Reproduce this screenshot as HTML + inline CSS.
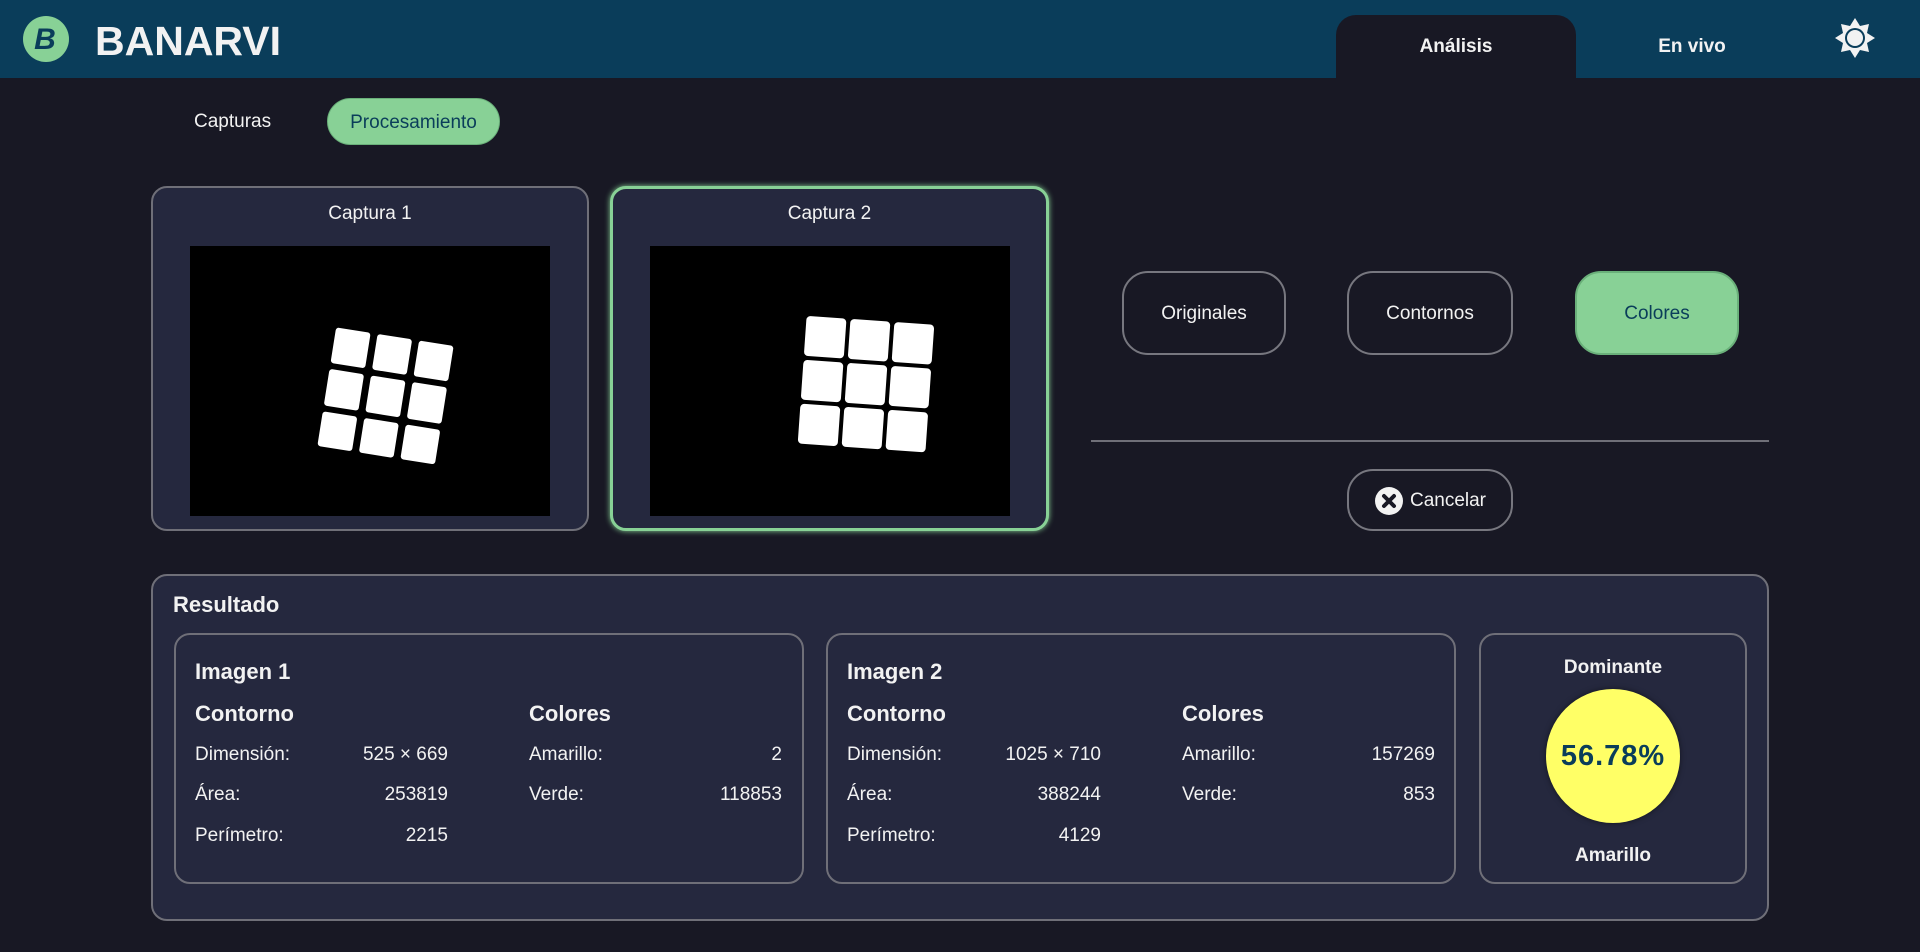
<!DOCTYPE html>
<html><head><meta charset="utf-8">
<style>
*{box-sizing:border-box;margin:0;padding:0}
body{width:1920px;height:952px;background:#181824;font-family:"Liberation Sans",Arial,sans-serif;color:#f2f2f2;position:relative;overflow:hidden}
.a{position:absolute}
.hdr{left:0;top:0;width:1920px;height:78px;background:#0a3d5a}
.card{background:#25283e;border:2px solid #6f6f78;border-radius:16px}
.btn{border:2px solid #77777f;border-radius:26px;display:flex;align-items:center;justify-content:center;font-size:19px;color:#f2f2f2}
.lbl{font-size:19px}
.b{font-weight:bold}
.r{text-align:right}
</style></head><body>
<div class="a hdr"></div>
<svg class="a" style="left:23px;top:16px" width="46" height="46" viewBox="0 0 46 46"><circle cx="23" cy="23" r="23" fill="#88d196"/><text x="22" y="33" text-anchor="middle" font-family="Liberation Sans" font-weight="bold" font-style="italic" font-size="30" fill="#0a3d5a">B</text></svg>
<div class="a b" style="left:95px;top:18px;font-size:41px;color:#f2f2f2">BANARVI</div>
<div class="a" style="left:1336px;top:15px;width:240px;height:63px;background:#181824;border-radius:20px 20px 0 0"></div>
<div class="a b" style="left:1336px;top:36px;width:240px;text-align:center;font-size:19px">Análisis</div>
<div class="a b" style="left:1592px;top:36px;width:200px;text-align:center;font-size:19px">En vivo</div>
<svg class="a" style="left:1834px;top:17px" width="42" height="42" viewBox="-21 -21 42 42"><polygon fill="#f2f2f2" points="0,-20 5,-12 14,-14 12,-5 20,0 12,5 14,14 5,12 0,20 -5,12 -14,14 -12,5 -20,0 -12,-5 -14,-14 -5,-12"/><circle r="10" fill="#0a3d5a"/><circle r="8" fill="#f2f2f2"/></svg>

<div class="a" style="left:194px;top:111px;font-size:19px">Capturas</div>
<div class="a" style="left:327px;top:98px;width:173px;height:47px;background:#88d196;border-radius:24px;color:#0a3d5a;font-size:19px;display:flex;align-items:center;justify-content:center;border:1px solid #6ab07a;padding-top:2px">Procesamiento</div>

<div class="a card" style="left:151px;top:186px;width:438px;height:345px"></div>
<div class="a lbl" style="left:151px;top:203px;width:438px;text-align:center">Captura 1</div>
<svg class="a" style="left:190px;top:246px" width="360" height="270" viewBox="0 0 360 270"><rect width="360" height="270" fill="#000"/>
<g transform="rotate(9 196 150)" fill="#fff"><rect x="136" y="90" width="35" height="36" rx="3"/><rect x="178" y="90" width="35" height="36" rx="3"/><rect x="220" y="90" width="35" height="36" rx="3"/><rect x="136" y="132" width="35" height="37" rx="3"/><rect x="178" y="132" width="35" height="37" rx="3"/><rect x="220" y="132" width="35" height="37" rx="3"/><rect x="136" y="175" width="35" height="35" rx="3"/><rect x="178" y="175" width="35" height="35" rx="3"/><rect x="220" y="175" width="35" height="35" rx="3"/></g></svg>

<div class="a card" style="left:610px;top:186px;width:439px;height:345px;border:3px solid #88d196;box-shadow:0 0 6px #88d196"></div>
<div class="a lbl" style="left:610px;top:203px;width:439px;text-align:center">Captura 2</div>
<svg class="a" style="left:650px;top:246px" width="360" height="270" viewBox="0 0 360 270"><rect width="360" height="270" fill="#000"/>
<g transform="rotate(4 214 138)" fill="#fff"><rect x="152" y="74" width="40" height="40" rx="4"/><rect x="196" y="74" width="40" height="40" rx="4"/><rect x="240" y="74" width="40" height="40" rx="4"/><rect x="152" y="118" width="40" height="40" rx="4"/><rect x="196" y="118" width="40" height="40" rx="4"/><rect x="240" y="118" width="40" height="40" rx="4"/><rect x="152" y="162" width="40" height="40" rx="4"/><rect x="196" y="162" width="40" height="40" rx="4"/><rect x="240" y="162" width="40" height="40" rx="4"/></g></svg>

<div class="a btn" style="left:1122px;top:271px;width:164px;height:84px;padding-top:2px">Originales</div>
<div class="a btn" style="left:1347px;top:271px;width:166px;height:84px;padding-top:2px">Contornos</div>
<div class="a btn" style="left:1575px;top:271px;width:164px;height:84px;background:#88d196;color:#0a3d5a;border-color:#6ab07a;padding-top:2px">Colores</div>
<div class="a" style="left:1091px;top:440px;width:678px;height:2px;background:#6f6f78"></div>
<div class="a btn" style="left:1347px;top:469px;width:166px;height:62px;gap:6px;padding-top:2px"><svg width="30" height="30" viewBox="0 0 30 30"><circle cx="15" cy="15" r="14" fill="#f2f2f2"/><path d="M10 10L20 20M20 10L10 20" stroke="#181824" stroke-width="4" stroke-linecap="round"/></svg>Cancelar</div>

<div class="a card" style="left:151px;top:574px;width:1618px;height:347px"></div>
<div class="a b" style="left:173px;top:592px;font-size:22px">Resultado</div>

<div class="a card" style="left:174px;top:633px;width:630px;height:251px;background:transparent"></div>
<div class="a b" style="left:195px;top:659px;font-size:22px">Imagen 1</div>
<div class="a b" style="left:195px;top:701px;font-size:22px">Contorno</div>
<div class="a b" style="left:529px;top:701px;font-size:22px">Colores</div>
<div class="a lbl" style="left:195px;top:744px">Dimensión:</div><div class="a lbl r" style="left:300px;top:744px;width:148px">525 × 669</div>
<div class="a lbl" style="left:195px;top:784px">Área:</div><div class="a lbl r" style="left:300px;top:784px;width:148px">253819</div>
<div class="a lbl" style="left:195px;top:825px">Perímetro:</div><div class="a lbl r" style="left:300px;top:825px;width:148px">2215</div>
<div class="a lbl" style="left:529px;top:744px">Amarillo:</div><div class="a lbl r" style="left:640px;top:744px;width:142px">2</div>
<div class="a lbl" style="left:529px;top:784px">Verde:</div><div class="a lbl r" style="left:640px;top:784px;width:142px">118853</div>

<div class="a card" style="left:826px;top:633px;width:630px;height:251px;background:transparent"></div>
<div class="a b" style="left:847px;top:659px;font-size:22px">Imagen 2</div>
<div class="a b" style="left:847px;top:701px;font-size:22px">Contorno</div>
<div class="a b" style="left:1182px;top:701px;font-size:22px">Colores</div>
<div class="a lbl" style="left:847px;top:744px">Dimensión:</div><div class="a lbl r" style="left:950px;top:744px;width:151px">1025 × 710</div>
<div class="a lbl" style="left:847px;top:784px">Área:</div><div class="a lbl r" style="left:950px;top:784px;width:151px">388244</div>
<div class="a lbl" style="left:847px;top:825px">Perímetro:</div><div class="a lbl r" style="left:950px;top:825px;width:151px">4129</div>
<div class="a lbl" style="left:1182px;top:744px">Amarillo:</div><div class="a lbl r" style="left:1290px;top:744px;width:145px">157269</div>
<div class="a lbl" style="left:1182px;top:784px">Verde:</div><div class="a lbl r" style="left:1290px;top:784px;width:145px">853</div>

<div class="a card" style="left:1479px;top:633px;width:268px;height:251px;background:transparent"></div>
<div class="a b" style="left:1479px;top:657px;width:268px;text-align:center;font-size:19px">Dominante</div>
<div class="a" style="left:1546px;top:689px;width:134px;height:134px;border-radius:50%;background:#ffff66;box-shadow:0 0 6px rgba(0,0,0,.5);display:flex;align-items:center;justify-content:center;color:#0a3d5a;font-weight:bold;font-size:29px;letter-spacing:1px">56.78%</div>
<div class="a b" style="left:1479px;top:845px;width:268px;text-align:center;font-size:19px">Amarillo</div>
</body></html>
